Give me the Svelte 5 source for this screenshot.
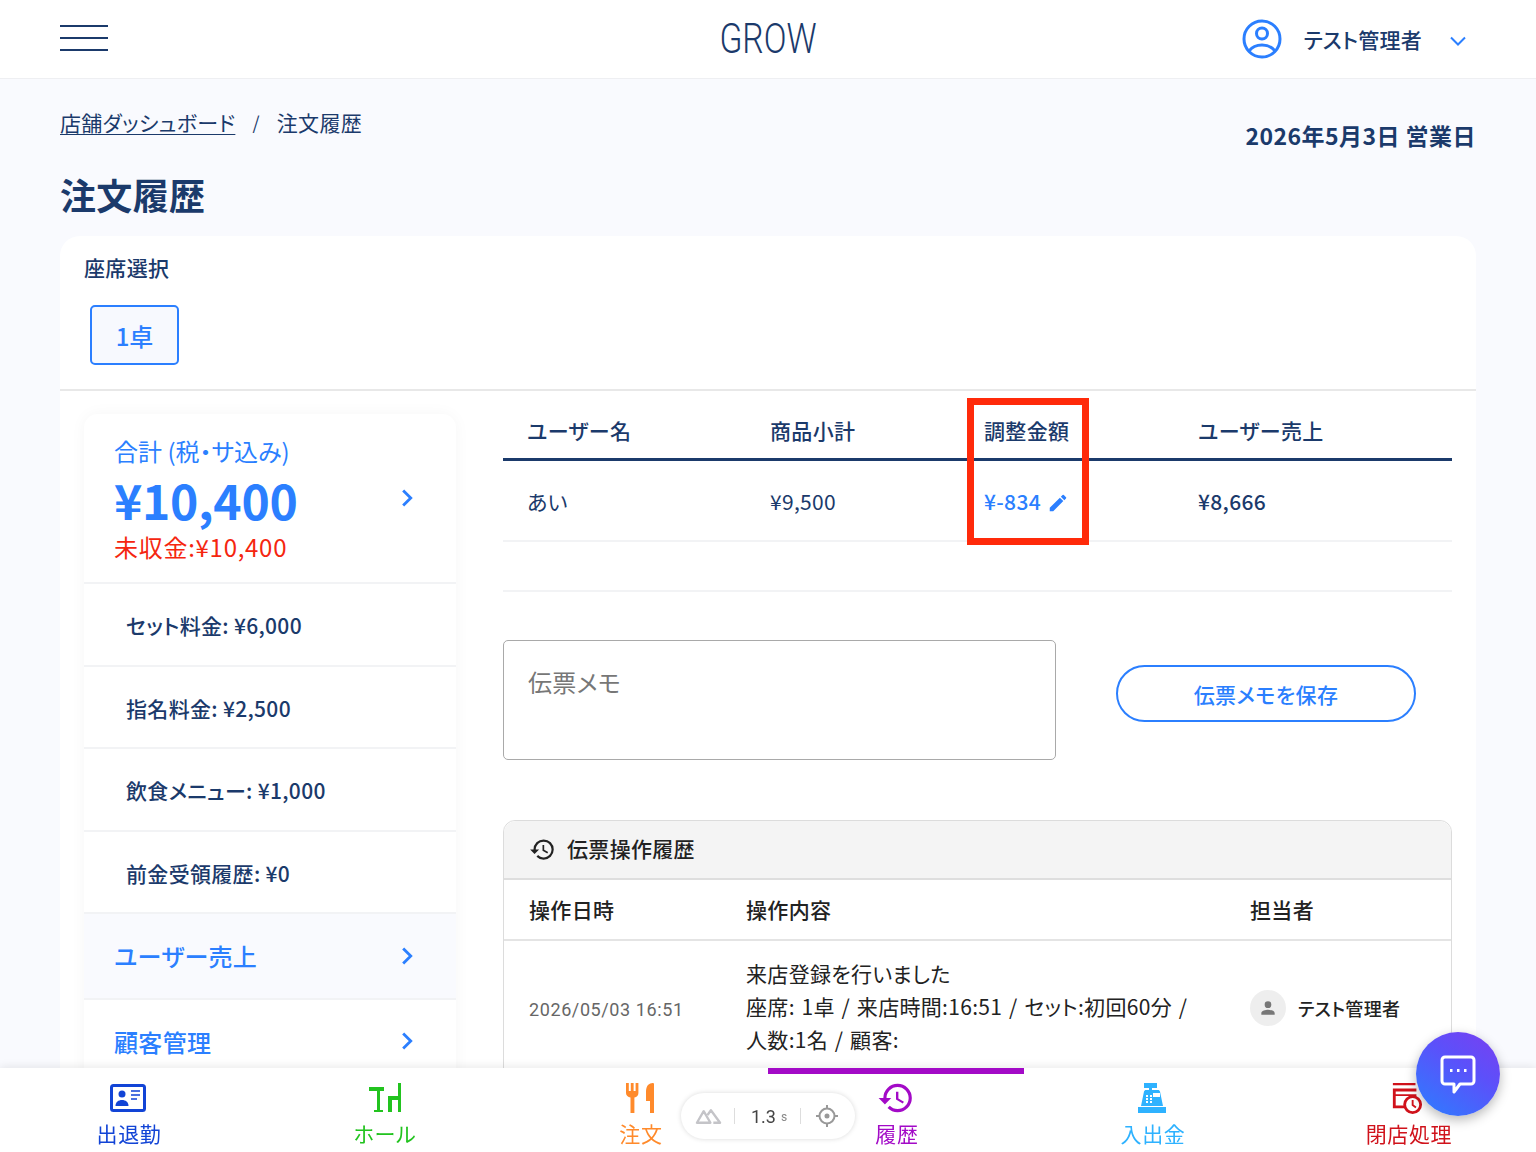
<script>
  const summaryRows = ['セット料金: ¥6,000', '指名料金: ¥2,500', '飲食メニュー: ¥1,000', '前金受領履歴: ¥0'];
  const historyPath = 'M13 3a9 9 0 0 0-9 9H1l3.89 3.89.07.14L9 12H6c0-3.87 3.13-7 7-7s7 3.13 7 7-3.13 7-7 7c-1.93 0-3.68-.79-4.94-2.06l-1.42 1.42A8.95 8.95 0 0 0 13 21a9 9 0 0 0 0-18zm-1 5v5l4.28 2.54.72-1.21-3.5-2.08V8H12z';
</script>

<div class="page">
  <header class="topbar">
    <button class="burger" aria-label="menu"><span></span><span></span><span></span></button>
    <div class="logo">GROW</div>
    <div class="account">
      <svg class="avatar" viewBox="0 0 40 40" fill="none" stroke="#2b7fff" stroke-width="3">
        <circle cx="20" cy="20" r="18" />
        <circle cx="20" cy="14.500" r="5.500" />
        <path d="M7 32c3-4 8-6 13-6s10 2 13 6" />
      </svg>
      <span class="account-name">テスト管理者</span>
      <svg class="caret" viewBox="0 0 16 10" fill="none" stroke="#2b7fff" stroke-width="2"><path d="M1 1.500l7 7 7-7" /></svg>
    </div>
  </header>

  <main class="content">
    <div class="crumb-row">
      <nav class="crumbs">
        <a href="#top">店舗ダッシュボード</a>
        <span class="sep">/</span>
        <span>注文履歴</span>
      </nav>
      <div class="bizdate">2026年5月3日 営業日</div>
    </div>
    <h1>注文履歴</h1>

    <section class="card">
      <div class="seats">
        <div class="seats-label">座席選択</div>
        <button class="seat">1卓</button>
      </div>

      <div class="columns">
        <aside class="summary">
          <div class="total">
            <div class="total-text">
              <div class="total-label">合計 (税・サ込み)</div>
              <div class="total-value">¥10,400</div>
              <div class="unpaid">未収金:¥10,400</div>
            </div>
            <svg class="chev" viewBox="0 0 12 18" fill="none" stroke="#2b7fff" stroke-width="2.600"><path d="M2 2l7 7-7 7" /></svg>
          </div>
          {#each summaryRows as row}
            <div class="sum-row">{row}</div>
          {/each}
          <div class="link-row tinted">
            <span>ユーザー売上</span>
            <svg class="chev" viewBox="0 0 12 18" fill="none" stroke="#2b7fff" stroke-width="2.600"><path d="M2 2l7 7-7 7" /></svg>
          </div>
          <div class="link-row">
            <span>顧客管理</span>
            <svg class="chev" viewBox="0 0 12 18" fill="none" stroke="#2b7fff" stroke-width="2.600"><path d="M2 2l7 7-7 7" /></svg>
          </div>
        </aside>

        <div class="detail">
          <div class="sales">
            <div class="sales-head">
              <div>ユーザー名</div>
              <div>商品小計</div>
              <div>調整金額</div>
              <div>ユーザー売上</div>
            </div>
            <div class="sales-row">
              <div>あい</div>
              <div>¥9,500</div>
              <div class="adjust">
                ¥-834
                <svg viewBox="0 0 24 24" fill="#2b7fff"><path d="M3 17.250V21h3.750L17.810 9.940l-3.750-3.750L3 17.250zM20.710 7.040a1 1 0 0 0 0-1.410l-2.340-2.340a1 1 0 0 0-1.410 0l-1.830 1.830 3.750 3.750 1.830-1.830z" /></svg>
              </div>
              <div class="strong">¥8,666</div>
            </div>
            <div class="highlight"></div>
          </div>
          <div class="spacer-row"></div>

          <div class="memo-row">
            <div class="memo">伝票メモ</div>
            <button class="save">伝票メモを保存</button>
          </div>

          <div class="log">
            <div class="log-title">
              <svg viewBox="0 0 24 24" fill="#222"><path d={historyPath} /></svg>
              <span>伝票操作履歴</span>
            </div>
            <div class="log-grid log-head">
              <div>操作日時</div>
              <div>操作内容</div>
              <div>担当者</div>
            </div>
            <div class="log-grid log-row">
              <div class="log-date">2026/05/03 16:51</div>
              <div class="log-text">
                来店登録を行いました<br />
                座席: 1卓 / 来店時間:16:51 / セット:初回60分 /<br />
                人数:1名 / 顧客:
              </div>
              <div class="log-user">
                <span class="user-dot">
                  <svg viewBox="0 0 24 24" fill="#777"><path d="M12 12a4 4 0 1 0 0-8 4 4 0 0 0 0 8zm0 2c-2.700 0-8 1.300-8 4v2h16v-2c0-2.700-5.300-4-8-4z" /></svg>
                </span>
                <span>テスト管理者</span>
              </div>
            </div>
          </div>
        </div>
      </div>
    </section>
  </main>

  <nav class="tabbar">
    <div class="tab" style="color:#1244d6">
      <svg viewBox="0 0 36 32"><rect x="1.500" y="3.500" width="33" height="25" rx="2" fill="none" stroke="currentColor" stroke-width="3" /><circle cx="12" cy="12" r="3.500" fill="currentColor" /><path d="M5.500 24c0-4 3-6 6.500-6s6.500 2 6.500 6z" fill="currentColor" /><path d="M21 9h9M21 13h9M21 17h6" stroke="currentColor" stroke-width="1.600" /></svg>
      <span>出退勤</span>
    </div>
    <div class="tab" style="color:#22c31f">
      <svg viewBox="0 0 36 32"><path d="M3 5h15v4h-4v19h3v2H8v-2h3V9H3zM32 1h3v29h-3V18h-6v12h-4V14h10z" fill="currentColor" /></svg>
      <span>ホール</span>
    </div>
    <div class="tab" style="color:#ff8a2b">
      <svg viewBox="0 0 36 32"><path d="M4 1h2.800v8h2V1h2.800v8h2V1h2.800v10c0 2.500-1.500 4-4 4.600V31H8.500V15.600C6 15 4 13.500 4 11zM26 3c2-2 6-3 6-1v29h-4V19h-4V9c0-2.500 1-5 2-6z" fill="currentColor" /></svg>
      <span>注文</span>
    </div>
    <div class="tab active" style="color:#a30ac7">
      <svg class="big" viewBox="0 0 24 24" fill="currentColor"><path d={historyPath} /></svg>
      <span>履歴</span>
    </div>
    <div class="tab" style="color:#2eb2ff">
      <svg viewBox="0 0 36 32"><path d="M10 1h13v5h-5v2h6c1 0 1.700.7 2 1.600L29 24H7l3-14.400C10.300 8.700 11 8 12 8h3V6h-5zM4 25h28v6H4z" fill="currentColor" /><path d="M19 11h7v4h-7zM12 13h2v2h-2zM16 13h2v2h-2zM12 16h2v2h-2zM16 16h2v2h-2zM12 19h2v2h-2zM16 19h2v2h-2z" fill="#fff" /></svg>
      <span>入出金</span>
    </div>
    <div class="tab" style="color:#d0121b">
      <svg class="shift" viewBox="0 0 36 34"><path d="M3 1h24v2.500H3zM2 7h26v3H6v3h22v2H6v10h13v3H3V7z" fill="currentColor" /><circle cx="24" cy="24" r="8.500" fill="#fff" stroke="currentColor" stroke-width="3" /><path d="M24 19v5.500l3.500 2.500" fill="none" stroke="currentColor" stroke-width="2" /></svg>
      <span>閉店処理</span>
    </div>
  </nav>

  <div class="timer-pill">
    <svg class="pill-logo" viewBox="0 0 28 18" fill="none" stroke="#c4c4c8" stroke-width="2.400" stroke-linejoin="round"><path d="M9 4L2 16h14zM13 8l3.500-5L26 16h-7" /></svg>
    <i></i>
    <span class="pill-num">1.3</span><span class="pill-unit">s</span>
    <i></i>
    <svg class="pill-target" viewBox="0 0 24 24" fill="none" stroke="#999" stroke-width="2"><circle cx="12" cy="12" r="7.500" /><circle cx="12" cy="12" r="1.500" fill="#999" /><path d="M12 1v3.500M12 19.500V23M1 12h3.500M19.500 12H23" /></svg>
  </div>

  <button class="fab" aria-label="chat">
    <svg viewBox="0 0 36 40" fill="none" stroke="#fff" stroke-width="3"><path d="M5 2h26a3 3 0 0 1 3 3v21a3 3 0 0 1-3 3H20l-6 8v-8H5a3 3 0 0 1-3-3V5a3 3 0 0 1 3-3z" stroke-linejoin="round" /><path d="M10 15.500h2.500M17 15.500h2.500M24 15.500h2.500" /></svg>
  </button>
</div>

<style>
  :global(body) {
    margin: 0;
    background: #f9fafe;
    overflow: hidden;
  }

  .page {
    height: 1152px;
    overflow: hidden;
    position: relative;
    font-family: "Noto Sans CJK JP", sans-serif;
    font-feature-settings: "palt";
    letter-spacing: 0.02em;
    color: #1b3a6b;
  }

  .topbar {
    height: 78px;
    background: #fff;
    border-bottom: 1px solid #eeeff2;
    padding: 0 60px;
    display: flex;
    align-items: center;
    justify-content: space-between;
    position: relative;
  }

  .burger {
    width: 48px;
    height: 26px;
    padding: 0;
    border: 0;
    background: none;
    display: flex;
    flex-direction: column;
    justify-content: space-between;
    margin-top: -2px;
  }

  .burger span {
    display: block;
    height: 2px;
    background: #1b3a6b;
  }

  .logo {
    position: absolute;
    left: 0;
    right: 0;
    text-align: center;
    font-family: "Roboto", sans-serif;
    font-weight: 300;
    font-size: 42px;
    line-height: 78px;
    transform: scaleX(0.8);
    letter-spacing: 0;
  }

  .account {
    display: flex;
    align-items: center;
    position: relative;
    margin-right: 10px;
  }

  .avatar {
    width: 40px;
    height: 40px;
    margin-right: 22px;
  }

  .account-name {
    font-size: 21px;
    font-weight: 500;
    letter-spacing: 0.01em;
    margin-right: 28px;
  }

  .caret {
    width: 16px;
    height: 10px;
    margin-top: 4px;
  }

  .content {
    padding: 0 60px;
  }

  .crumb-row {
    display: flex;
    justify-content: space-between;
    padding-top: 30px;
    height: 57px;
  }

  .crumbs {
    font-size: 21px;
    line-height: 26px;
    display: flex;
    gap: 17px;
  }

  .crumbs a {
    color: inherit;
    text-decoration: underline;
    text-underline-offset: 3px;
    text-decoration-thickness: 1px;
  }

  .sep {
    font-size: 18px;
  }

  .bizdate {
    font-size: 23px;
    font-weight: 700;
    line-height: 36px;
    margin-top: 8px;
    letter-spacing: 0.02em;
  }

  h1 {
    margin: 0;
    font-size: 36px;
    font-weight: 700;
    line-height: 50px;
    margin-top: 3px;
    margin-bottom: 17px;
  }

  .card {
    background: #fff;
    border-radius: 20px 20px 0 0;
    height: 900px;
  }

  .seats {
    padding: 17px 24px 0;
    box-sizing: border-box;
    border-bottom: 2px solid #e8e8e8;
    height: 155px;
  }

  .seats-label {
    font-size: 21px;
    font-weight: 500;
    line-height: 28px;
  }

  .seat {
    margin: 24px 0 0 6px;
    display: block;
    width: 89px;
    height: 60px;
    border: 2px solid #2b7fff;
    border-radius: 5px;
    background: #f7f9fe;
    color: #2b7fff;
    font: 500 24px "Noto Sans CJK JP", sans-serif;
    padding: 0;
  }

  .columns {
    display: flex;
    padding: 23px 24px 0;
    gap: 47px;
  }

  .summary {
    width: 372px;
    flex: none;
    border-radius: 14px;
    box-shadow: 0 0 16px rgba(0, 0, 0, 0.04);
  }

  .total {
    height: 170px;
    box-sizing: border-box;
    padding: 19px 42px 0 30px;
    border-bottom: 2px solid #f2f3f5;
    display: flex;
    justify-content: space-between;
    align-items: flex-start;
  }

  .total .chev {
    margin-top: 55px;
  }

  .chev {
    width: 13px;
    height: 20px;
  }

  .total-label {
    color: #2b7fff;
    font-size: 24px;
    line-height: 36px;
    letter-spacing: 0;
  }

  .total-value {
    color: #2b7fff;
    font-size: 48px;
    font-weight: 700;
    line-height: 60px;
    letter-spacing: -0.3px;
  }

  .unpaid {
    color: #f5260f;
    font-size: 24px;
    line-height: 30px;
    letter-spacing: 0.03em;
    margin-top: 3px;
  }

  .sum-row {
    height: 82.500px;
    box-sizing: border-box;
    padding-left: 42px;
    font-size: 21px;
    font-weight: 500;
    line-height: 82px;
    border-bottom: 2px solid #f2f3f5;
  }

  .link-row {
    height: 85.500px;
    box-sizing: border-box;
    padding: 0 42px 0 30px;
    display: flex;
    justify-content: space-between;
    align-items: center;
    color: #2b7fff;
    font-size: 24px;
    font-weight: 500;
    border-bottom: 2px solid #f2f3f5;
  }

  .link-row.tinted {
    background: #f9fafe;
  }

  .detail {
    width: 949px;
    flex: none;
  }

  .sales {
    position: relative;
  }

  .sales-head,
  .sales-row {
    display: grid;
    grid-template-columns: 243px 214px 214px 1fr;
    padding-left: 24px;
  }

  .sales-head {
    height: 44px;
    border-bottom: 3px solid #1b3a6b;
    font-size: 21px;
    font-weight: 500;
    line-height: 33px;
  }

  .sales-row {
    height: 79px;
    font-size: 21px;
    line-height: 81px;
    border-bottom: 2px solid #f2f3f5;
  }

  .strong {
    font-weight: 500;
  }

  .adjust {
    color: #2b7fff;
    font-weight: 500;
    display: flex;
    align-items: center;
    gap: 6px;
  }

  .adjust svg {
    width: 22px;
    height: 22px;
    margin-top: 2px;
  }

  .highlight {
    position: absolute;
    left: 464px;
    top: -16px;
    width: 122px;
    height: 147px;
    box-sizing: border-box;
    border: 7px solid #ff2a0a;
  }

  .spacer-row {
    height: 48px;
    border-bottom: 2px solid #f2f3f5;
  }

  .memo-row {
    display: flex;
    align-items: flex-start;
    margin-top: 48px;
  }

  .memo {
    width: 553px;
    height: 120px;
    box-sizing: border-box;
    border: 1px solid #a9a9a9;
    border-radius: 5px;
    padding: 23px 24px;
    font-size: 24px;
    line-height: 36px;
    color: #777;
  }

  .save {
    margin: 25px 0 0 60px;
    width: 300px;
    height: 57px;
    border: 2px solid #2b7fff;
    border-radius: 29px;
    background: #fff;
    color: #2b7fff;
    font: 500 21px "Noto Sans CJK JP", sans-serif;
    font-feature-settings: "palt";
    letter-spacing: 0.02em;
    padding: 0;
  }

  .log {
    margin-top: 60px;
    border: 1px solid #dcdcdc;
    border-radius: 12px 12px 0 0;
    color: #222;
  }

  .log-title {
    height: 59px;
    box-sizing: border-box;
    background: #f4f4f4;
    border-bottom: 2px solid #dedede;
    border-radius: 12px 12px 0 0;
    display: flex;
    align-items: center;
    padding-left: 25px;
    gap: 11px;
    font-size: 21px;
    font-weight: 500;
  }

  .log-title span {
    margin-bottom: 4px;
  }

  .log-title svg {
    width: 27px;
    height: 27px;
  }

  .log-grid {
    display: grid;
    grid-template-columns: 217px 504px 1fr;
    padding-left: 25px;
  }

  .log-head {
    height: 61px;
    box-sizing: border-box;
    border-bottom: 2px solid #e4e4e4;
    font-size: 21px;
    font-weight: 500;
    line-height: 58px;
  }

  .log-row {
    padding-top: 16px;
    padding-bottom: 30px;
    align-items: center;
  }

  .log-date {
    font-size: 18px;
    color: #666;
    font-family: "Roboto", "Noto Sans CJK JP", sans-serif;
    letter-spacing: 0.6px;
    margin-top: 5px;
  }

  .log-text {
    font-size: 21px;
    line-height: 33px;
    white-space: nowrap;
    word-spacing: 1.700px;
  }

  .log-user {
    display: flex;
    align-items: center;
    gap: 12px;
    font-size: 18px;
    font-weight: 500;
    margin-top: 3px;
  }

  .user-dot {
    width: 36px;
    height: 36px;
    border-radius: 50%;
    background: #eee;
    display: flex;
    align-items: center;
    justify-content: center;
  }

  .user-dot svg {
    width: 20px;
    height: 20px;
  }

  .tabbar {
    position: fixed;
    left: 0;
    right: 0;
    top: 1068px;
    height: 84px;
    background: #fff;
    box-shadow: 0 -2px 8px rgba(0, 0, 0, 0.08);
    display: grid;
    grid-template-columns: repeat(6, 1fr);
  }

  .tab {
    display: flex;
    flex-direction: column;
    align-items: center;
    position: relative;
    padding-top: 14px;
    font-size: 21px;
    line-height: 30px;
    letter-spacing: 0.03em;
  }

  .tab span {
    margin-left: 2px;
  }

  .tab svg {
    width: 36px;
    height: 32px;
    margin-bottom: 4px;
  }

  .tab svg.big {
    width: 38px;
    height: 38px;
    margin: -3px 0 1px;
  }

  .tab svg.shift {
    margin-left: -2px;
  }

  .tab.active::before {
    content: "";
    position: absolute;
    left: 0;
    right: 0;
    top: 0;
    height: 6px;
    background: #a30ac7;
  }

  .timer-pill {
    position: fixed;
    left: 681px;
    top: 1093px;
    width: 174px;
    height: 46px;
    box-sizing: border-box;
    background: #fff;
    border-radius: 23px;
    box-shadow: 0 0 5px rgba(0, 0, 0, 0.15);
    display: flex;
    align-items: center;
    padding-left: 14px;
    color: #444;
    font-family: "Roboto", sans-serif;
    letter-spacing: 0;
  }

  .timer-pill i {
    width: 1px;
    height: 16px;
    background: #ddd;
  }

  .pill-logo {
    width: 27px;
    height: 18px;
    margin-right: 12px;
  }

  .pill-num {
    font-size: 18px;
    margin-left: 16px;
  }

  .pill-unit {
    font-size: 12px;
    color: #888;
    margin: 2px 13px 0 5px;
  }

  .pill-target {
    width: 24px;
    height: 24px;
    margin-left: 14px;
  }

  .fab {
    position: fixed;
    left: 1416px;
    top: 1032px;
    width: 84px;
    height: 84px;
    border: 0;
    padding: 0;
    border-radius: 50%;
    background: linear-gradient(215deg, #7a3ff0 0%, #5c50fa 40%, #2b7fff 100%);
    box-shadow: 0 4px 12px rgba(0, 0, 0, 0.28);
    display: flex;
    align-items: center;
    justify-content: center;
  }

  .fab svg {
    width: 36px;
    height: 40px;
    margin-top: 2px;
  }
</style>
